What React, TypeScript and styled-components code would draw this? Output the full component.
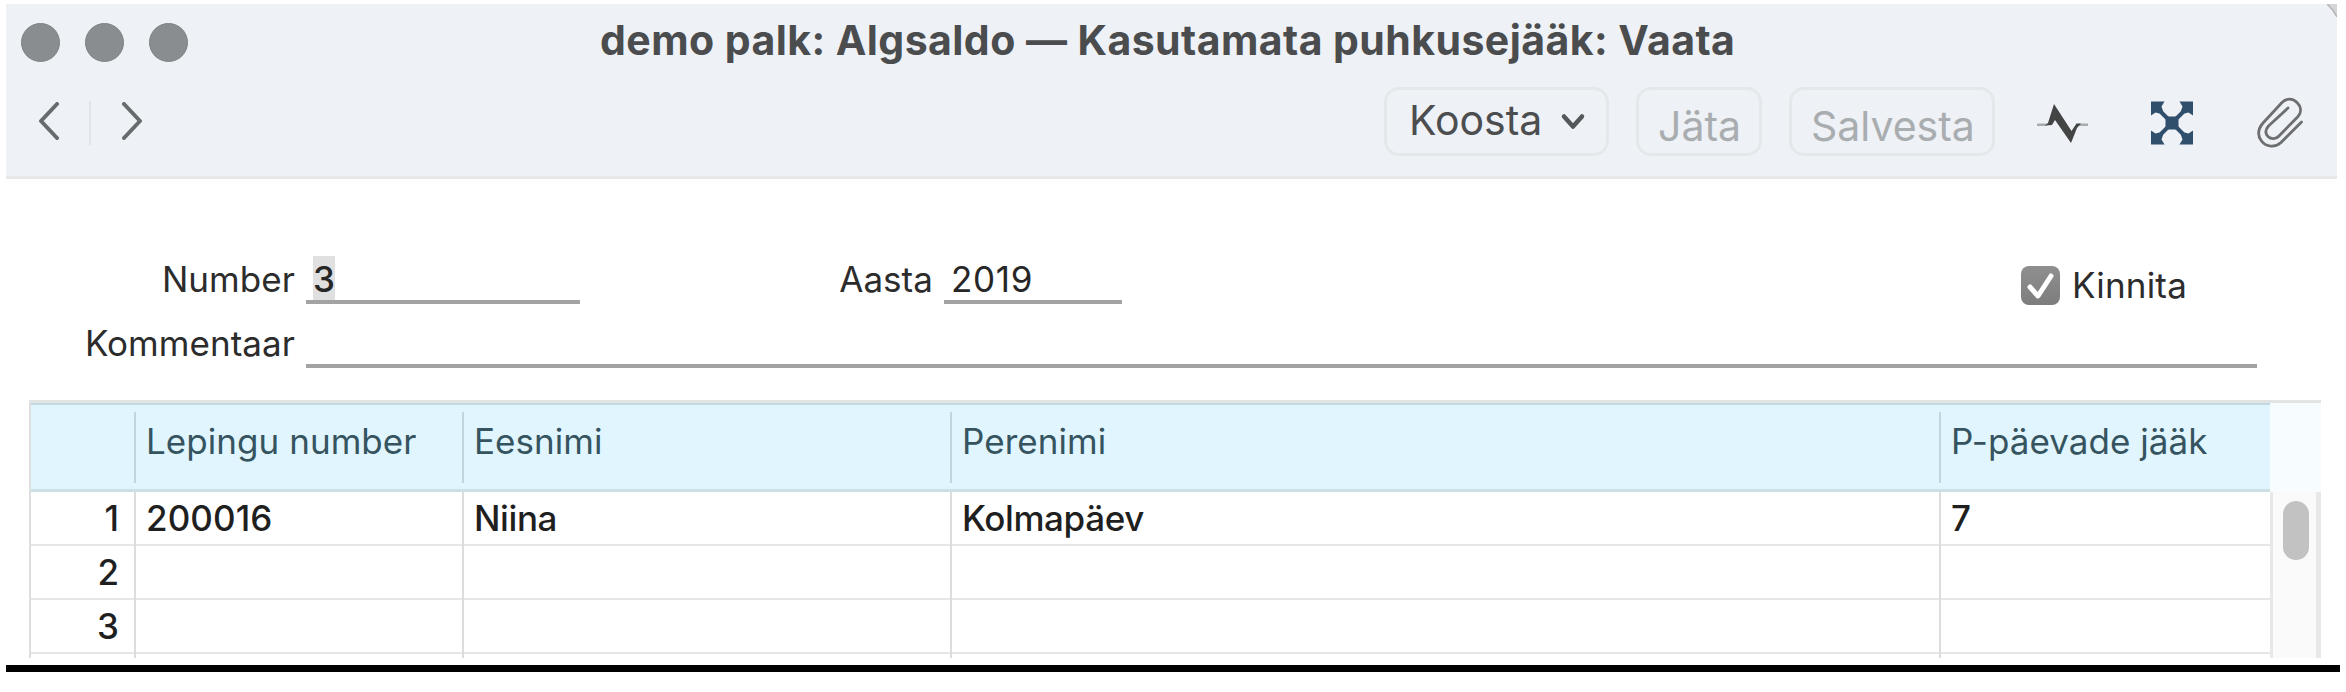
import React from "react";
import styled, { createGlobalStyle } from "styled-components";

const GlobalStyle = createGlobalStyle`
  * { box-sizing: border-box; }
  body {
    margin: 0;
    background: #fff;
    font-family: Inter, "Liberation Sans", sans-serif;
  }
`;

const Page = styled.main`
  width: 2346px;
  height: 692px;
  padding: 4px 6px 0;
  overflow: hidden;
`;

const Window = styled.section`
  display: flex;
  flex-direction: column;
  width: 2331px;
  height: 654px;
  overflow: hidden;
`;

const Header = styled.header`
  position: relative;
  flex: none;
  height: 175px;
  background: #eef1f6;
  border-bottom: 3px solid #e6e8e8;
`;

const CornerEdge = styled.svg`
  position: absolute;
  top: 0;
  right: 0;
`;

const TitleBar = styled.div`
  display: flex;
  align-items: center;
  height: 76px;
  padding-left: 15px;
`;

const Lights = styled.div`
  display: flex;
  gap: 25px;
  width: 579px;
`;

const Light = styled.span`
  width: 39px;
  height: 39px;
  border-radius: 50%;
  background: #8a8d90;
  border: 1px solid #808386;
`;

const Title = styled.h1`
  margin: 0 0 4px;
  font-size: 41px;
  line-height: 50px;
  font-weight: 700;
  letter-spacing: 0.44px;
  color: #4a4c4e;
  white-space: nowrap;
`;

const Toolbar = styled.div`
  display: flex;
  justify-content: space-between;
  padding: 7px 32px 0 32px;
  height: 76px;
`;

const Nav = styled.nav`
  display: flex;
  align-items: center;
  height: 69px;
  padding-bottom: 2px;
`;

const NavDivider = styled.span`
  width: 2px;
  height: 44px;
  margin: 5px 30px 0 29px;
  background: #e1e4e9;
`;

const Actions = styled.div`
  display: flex;
  align-items: flex-start;
  height: 69px;
`;

const Button = styled.button<{ $width: number; $muted?: boolean }>`
  display: flex;
  align-items: center;
  width: ${(p) => p.$width}px;
  height: 69px;
  margin-right: 27px;
  padding: ${(p) => (p.$muted ? "9px 0 0 19px" : "0 0 4px 22px")};
  border: 3px solid #e5e8eb;
  border-radius: 15px;
  background: transparent;
  font: 400 41px/50px Inter, "Liberation Sans", sans-serif;
  color: ${(p) => (p.$muted ? "#a9adb0" : "#4b4d4f")};
`;

const MenuArrow = styled.svg`
  margin: 5px 0 0 18px;
`;

const IconButton = styled.span<{ $left: number; $top: number }>`
  display: flex;
  margin: ${(p) => p.$top}px 0 0 ${(p) => p.$left}px;
`;

const Form = styled.form`
  flex: none;
  display: flex;
  flex-direction: column;
  gap: 16px;
  height: 221px;
  padding-top: 77px;
`;

const FormRow = styled.div`
  display: flex;
  height: 48px;
`;

const Label = styled.label<{ $width: number }>`
  width: ${(p) => p.$width}px;
  padding-right: 11px;
  text-align: right;
  font-size: 35px;
  line-height: 46px;
  letter-spacing: 0.05px;
  color: #2c2c2c;
`;

const Field = styled.div<{ $width: number }>`
  width: ${(p) => p.$width}px;
  height: 48px;
  padding-left: 7px;
  border-bottom: 4px solid #a3a3a3;
  font-size: 35px;
  line-height: 46px;
  letter-spacing: 0.7px;
  color: #262626;
`;

const Selection = styled.span`
  display: inline-block;
  height: 44px;
  width: 22px;
  background: #e0e0e0;
  font-weight: 500;
`;

const Confirm = styled.label`
  display: flex;
  align-items: center;
  gap: 12px;
  height: 40px;
  margin: 9px 0 0 899px;
  font-size: 35px;
  letter-spacing: 0.2px;
  color: #2c2c2c;
`;

const CheckBox = styled.span`
  display: flex;
  width: 39px;
  height: 39px;
  border-radius: 8px;
  background: linear-gradient(#8f8f8f, #7d7d7d);
`;

const TableArea = styled.div`
  display: flex;
  flex: 1;
  width: 2292px;
  margin-left: 23px;
  border-top: 3px solid #e2e4e4;
`;

const Table = styled.div`
  width: 2241px;
  border-left: 2px solid #dedede;
`;

const columns = "103px 328px 488px 989px 1fr";

const HeadRow = styled.div`
  display: grid;
  grid-template-columns: ${columns};
  height: 89px;
  padding: 7px 0 5px;
  background: #e1f5fe;
  border-top: 2px solid #c3d9e1;
  border-bottom: 3px solid #cbdfe5;
`;

const HeadCell = styled.div`
  padding-left: 10px;
  border-left: 2px solid #c3d5dc;
  height: 71px;
  font-size: 35px;
  line-height: 58px;
  letter-spacing: 0.05px;
  color: #35545f;
  white-space: nowrap;

  &:first-child { border-left: 0; }
`;

const BodyRow = styled.div`
  display: grid;
  grid-template-columns: ${columns};
  height: 54px;
  border-bottom: 2px solid #e6e6e6;
`;

const Cell = styled.div<{ $numeric?: boolean }>`
  height: 54px;
  padding-left: 10px;
  border-left: 2px solid #dcdcdc;
  font-size: 35px;
  font-weight: 500;
  line-height: 52px;
  letter-spacing: ${(p) => (p.$numeric ? 0.1 : -0.4)}px;
  color: #1f1f1f;
`;

const RowNumber = styled.div`
  padding-right: 15px;
  text-align: right;
  font-size: 35px;
  font-weight: 500;
  line-height: 52px;
  color: #1f1f1f;
`;

const ScrollColumn = styled.div`
  display: flex;
  flex-direction: column;
  width: 51px;
`;

const ScrollHead = styled.div`
  height: 89px;
  background: #f7fdff;
`;

const ScrollTrack = styled.div`
  flex: 1;
  padding: 9px 0 0 10px;
  background: #fafafa;
  border-left: 3px solid #e8e8e8;
  border-right: 5px solid #e8e8e8;
`;

const ScrollThumb = styled.div`
  width: 26px;
  height: 59px;
  border-radius: 13px;
  background: #c2c2c2;
`;

const Footer = styled.div`
  width: 2334px;
  height: 7px;
  margin-top: 7px;
  background: #000;
`;

const heads = ["", "Lepingu number", "Eesnimi", "Perenimi", "P-päevade jääk"];
const rows = [
  ["1", "200016", "Niina", "Kolmapäev", "7"],
  ["2", "", "", "", ""],
  ["3", "", "", "", ""],
  ["", "", "", "", ""],
];

function NavArrow({ d }: { d: string }) {
  return (
    <svg width="22" height="38" viewBox="0 0 22 38" fill="none" stroke="#686b6d" strokeWidth="4" strokeLinecap="round" strokeLinejoin="round">
      <path d={d} />
    </svg>
  );
}

function PulseIcon() {
  return (
    <svg width="52" height="44" viewBox="0 0 52 44">
      <path d="M0 21.500H10V24H0ZM42 21.500H51V24H42Z" fill="#a9acaf" />
      <path d="M8 23.500L11 21L17 2L34.500 29L39.500 21.500L44 21.500L40 26L34 41L18 18L15 23Z" fill="#434545" />
    </svg>
  );
}

function ExpandIcon() {
  const corner = "M1 .5H14.500L11.500 5.500L13 10L9.500 12.500L5.500 11.500L1 14.500Z";
  return (
    <svg width="44" height="44" viewBox="0 0 44 44" fill="#2f4f6c">
      <path d={corner} />
      <path d={corner} transform="translate(44 0) scale(-1 1)" />
      <path d={corner} transform="translate(0 44) scale(1 -1)" />
      <path d={corner} transform="translate(44 44) scale(-1 -1)" />
      <path d="M8 8L36 36M36 8L8 36" stroke="#2f4f6c" strokeWidth="4" />
      <rect x="15.500" y="15.500" width="13" height="13" rx="1" />
    </svg>
  );
}

function ClipIcon() {
  return (
    <svg width="48" height="52" viewBox="0 0 48 52" fill="none" stroke="#6c6e70" strokeWidth="2.800" strokeLinecap="round" strokeLinejoin="round">
      <path d="M44.500 25L24 45.500C18 51 9 50 4.500 44C0 38 1 32 6 26L25 5.500C29 1 36 1 40 5.500C44.500 10 44.500 15.500 41 19.500L22 39C19 42.500 14 42.500 11 39.500C8 36.500 8.500 32.500 11.500 29L31 11" />
    </svg>
  );
}

export default function App() {
  return (
    <Page>
      <GlobalStyle />
      <Window>
        <Header>
          <TitleBar>
            <Lights>
              <Light />
              <Light />
              <Light />
            </Lights>
            <Title>demo palk: Algsaldo — Kasutamata puhkusejääk: Vaata</Title>
          </TitleBar>
          <Toolbar>
            <Nav>
              <NavArrow d="M19 2L3 19L19 36" />
              <NavDivider />
              <NavArrow d="M3 2L19 19L3 36" />
            </Nav>
            <Actions>
              <Button $width={225}>
                Koosta
                <MenuArrow width="26" height="18" viewBox="0 0 26 18" fill="none" stroke="#55585a" strokeWidth="4.5" strokeLinecap="round" strokeLinejoin="round">
                  <path d="M4 3.500L13 13.500L22 3.500" />
                </MenuArrow>
              </Button>
              <Button $width={126} $muted>Jäta</Button>
              <Button $width={206} $muted>Salvesta</Button>
              <IconButton $left={15} $top={15}><PulseIcon /></IconButton>
              <IconButton $left={61} $top={14}><ExpandIcon /></IconButton>
              <IconButton $left={63} $top={10}><ClipIcon /></IconButton>
            </Actions>
          </Toolbar>
          <CornerEdge width="10" height="13" viewBox="0 0 10 13">
            <path d="M0 0H10V13Q6 5 0 0Z" fill="#d3d5d7" />
            <path d="M0 0Q6 5 10 13" fill="none" stroke="#b4b6b8" strokeWidth="1.5" />
          </CornerEdge>
        </Header>
        <Form>
          <FormRow>
            <Label $width={300}>Number</Label>
            <Field $width={274}><Selection>3</Selection></Field>
            <Label $width={364}>Aasta</Label>
            <Field $width={178}>2019</Field>
            <Confirm>
              <CheckBox>
                <svg width="39" height="39" viewBox="0 0 39 39" fill="none" stroke="#fff" strokeWidth="5" strokeLinecap="round" strokeLinejoin="round">
                  <path d="M9 21L17 30L30 10" />
                </svg>
              </CheckBox>
              Kinnita
            </Confirm>
          </FormRow>
          <FormRow>
            <Label $width={300}>Kommentaar</Label>
            <Field $width={1951} />
          </FormRow>
        </Form>
        <TableArea>
          <Table>
            <HeadRow>
              {heads.map((h, i) => <HeadCell key={i}>{h}</HeadCell>)}
            </HeadRow>
            {rows.map((row, r) => (
              <BodyRow key={r}>
                <RowNumber>{row[0]}</RowNumber>
                {row.slice(1).map((v, i) => <Cell key={i} $numeric={i === 0}>{v}</Cell>)}
              </BodyRow>
            ))}
          </Table>
          <ScrollColumn>
            <ScrollHead />
            <ScrollTrack><ScrollThumb /></ScrollTrack>
          </ScrollColumn>
        </TableArea>
      </Window>
      <Footer />
    </Page>
  );
}
